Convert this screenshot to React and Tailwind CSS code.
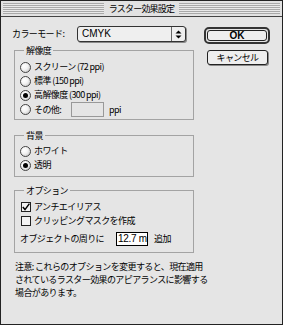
import React from "react";

const FONT = "font-['Noto_Sans_CJK_JP','Noto_Sans',sans-serif]";

function Radio({ checked }) {
  return (
    <span className="w-[11px] h-[11px] rounded-full border border-[#444] bg-[radial-gradient(circle_at_35%_35%,#ffffff_0%,#f4f4f4_40%,#bdbdbd_100%)] flex items-center justify-center shrink-0">
      {checked && <span className="w-[5px] h-[5px] rounded-full bg-black" />}
    </span>
  );
}

function Check({ checked }) {
  return (
    <span className="w-[10px] h-[10px] border border-[#222] bg-[#f4f4f4] flex items-center justify-center shrink-0">
      {checked && (
        <svg width="8" height="8" viewBox="0 0 8 8">
          <path d="M0.8 4 L3 6.6 L7.4 0.6" stroke="#000" strokeWidth="1.5" fill="none" />
        </svg>
      )}
    </span>
  );
}

function Stripes() {
  return (
    <div className="flex-1 h-[11px] bg-[repeating-linear-gradient(to_bottom,#a9a9a9_0px,#a9a9a9_1px,#e9e9e9_1px,#e9e9e9_2px)]" />
  );
}

export default function App() {
  return (
    <div className={`w-[283px] h-[325px] bg-[#e5e5e5] border border-[#222] flex flex-col text-black text-[9px] tracking-[-0.6px] ${FONT}`}>
      {/* title bar */}
      <div className="h-[16px] border-b border-[#444] bg-[#e2e2e2] flex items-center px-[2px] gap-[5px]">
        <Stripes />
        <span className="text-[9px] leading-[11px] tracking-[-0.8px]">ラスター効果設定</span>
        <Stripes />
      </div>

      <div className="flex">
        {/* left column */}
        <div className="w-[193px] pl-[11px] pt-[9px] flex flex-col">
          <div className="flex items-center h-[16px]">
            <span className="w-[65px]">カラーモード:</span>
            <div className="w-[109px] h-[16px] rounded-[3px] border border-[#333] bg-[#efefef] shadow-[1px_1px_0_#8a8a8a] flex">
              <span className="flex-1 pl-[4px] leading-[14px] text-[10px] tracking-normal font-['Liberation_Sans',sans-serif]">CMYK</span>
              <span className="w-[14px] border-l border-[#666] flex items-center justify-center">
                <svg width="7" height="9" viewBox="0 0 7 9">
                  <path d="M3.5 0.5 L6.5 3.5 L0.5 3.5 Z" fill="#000" />
                  <path d="M3.5 8.5 L6.5 5.5 L0.5 5.5 Z" fill="#000" />
                </svg>
              </span>
            </div>
          </div>

          {/* 解像度 */}
          <fieldset className="ml-[2px] mt-[3px] w-[180px] border border-[#a3a3a3] pl-[5px] pt-[4px] pb-[2px] flex flex-col">
            <legend className="ml-[4px] px-[2px] leading-[11px]">解像度</legend>
            <div className="h-[14px] flex items-center gap-[3px]"><Radio /><span className="whitespace-pre">スクリーン (72 ppi)</span></div>
            <div className="h-[14px] flex items-center gap-[3px]"><Radio /><span className="whitespace-pre">標準 (150 ppi)</span></div>
            <div className="h-[14px] flex items-center gap-[3px]"><Radio checked /><span className="whitespace-pre">高解像度 (300 ppi)</span></div>
            <div className="h-[15px] flex items-center gap-[3px]">
              <Radio />
              <span className="w-[34px]">その他:</span>
              <span className="w-[33px] h-[15px] border border-[#999] bg-[#e5e5e5]" />
              <span className="ml-[2px]">ppi</span>
            </div>
          </fieldset>

          {/* 背景 */}
          <fieldset className="ml-[2px] mt-[10px] w-[180px] border border-[#a3a3a3] pl-[5px] pt-[3px] pb-[4px] flex flex-col">
            <legend className="ml-[4px] px-[2px] leading-[11px]">背景</legend>
            <div className="h-[14px] flex items-center gap-[3px]"><Radio /><span>ホワイト</span></div>
            <div className="h-[14px] flex items-center gap-[3px]"><Radio checked /><span>透明</span></div>
          </fieldset>

          {/* オプション */}
          <fieldset className="ml-[2px] mt-[8px] w-[180px] border border-[#a3a3a3] pl-[5px] pt-[4px] pb-[5px] flex flex-col">
            <legend className="ml-[4px] px-[2px] leading-[11px]">オプション</legend>
            <div className="h-[14px] flex items-center gap-[3px] pl-[1px]"><Check checked /><span>アンチエイリアス</span></div>
            <div className="h-[14px] flex items-center gap-[3px] pl-[1px]"><Check /><span>クリッピングマスクを作成</span></div>
            <div className="h-[16px] mt-[3px] flex items-center">
              <span className="w-[96px]">オブジェクトの周りに</span>
              <span className="w-[32px] h-[14px] border border-black bg-white text-[10px] leading-[12px] tracking-[-0.3px] pl-[1px] font-['Liberation_Sans',sans-serif] whitespace-nowrap overflow-hidden">12.7 m</span>
              <span className="ml-[6px]">追加</span>
            </div>
          </fieldset>
        </div>

        {/* right column */}
        <div className="pl-[10px] pt-[10px] flex flex-col">
          <div className="w-[66px] h-[17px] rounded-[5px] border-2 border-[#333] p-[1px] bg-[#e5e5e5]">
            <div className="h-full rounded-[3px] border border-[#222] bg-[#eeeeee] flex items-center justify-center text-[10px] tracking-normal font-bold font-['Liberation_Sans_Narrow','Liberation_Sans',sans-serif]">OK</div>
          </div>
          <div className="ml-[3px] mt-[6px] w-[61px] h-[15px] rounded-[3px] border border-[#222] bg-[#eeeeee] shadow-[1px_1px_0_#8a8a8a] flex items-center justify-center">キャンセル</div>
        </div>
      </div>

      <div className="pl-[14px] pt-[7px] leading-[13px]">
        <div>注意: これらのオプションを変更すると、現在適用</div>
        <div>されているラスター効果のアピアランスに影響する</div>
        <div>場合があります。</div>
      </div>
    </div>
  );
}
